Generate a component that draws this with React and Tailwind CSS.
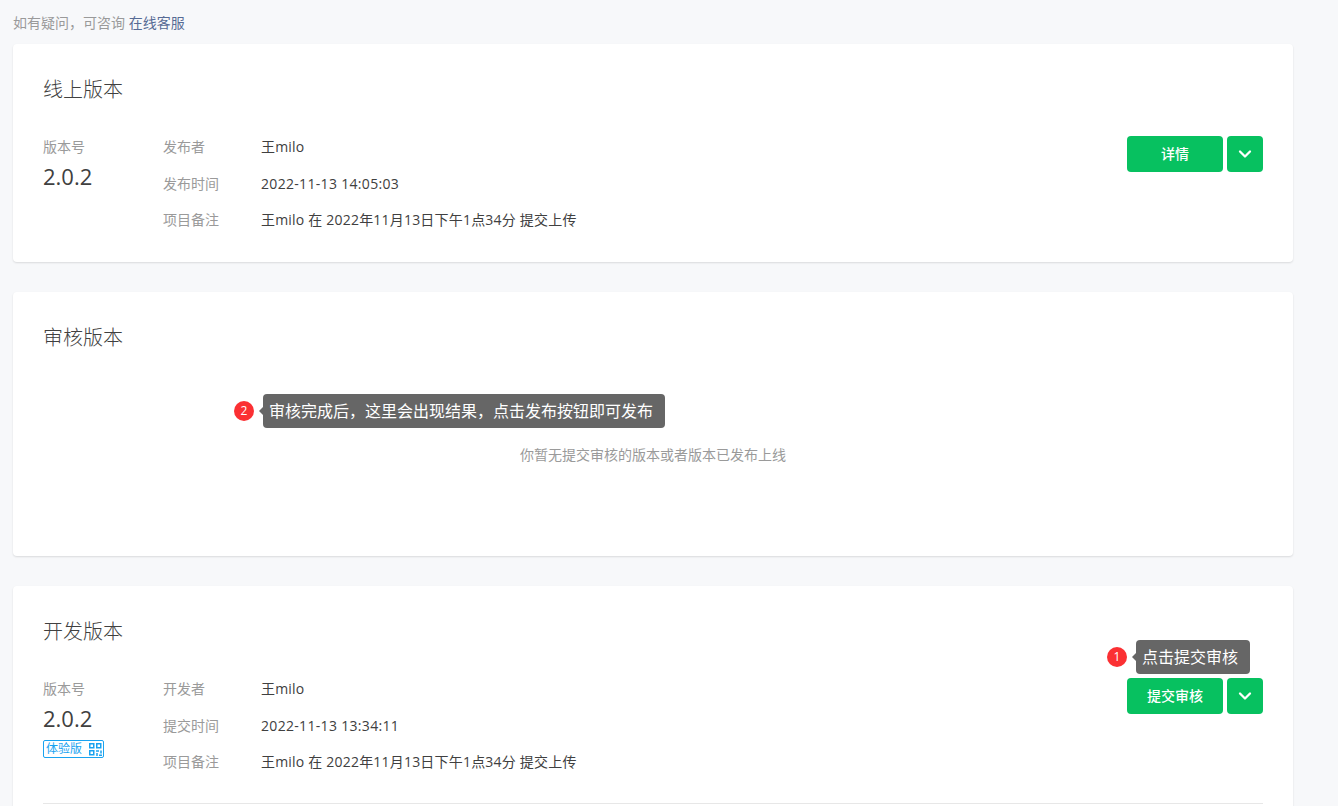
import React from 'react';
import { ChevronDown } from 'lucide-react';

const FONT = 'font-["Open_Sans","Noto_Sans_CJK_SC",sans-serif]';

const Field = ({ label, children }) => (
  <div className="flex h-[36.5px] items-center text-sm">
    <span className="w-[98px] text-[#9a9a9a]">{label}</span>
    <span className="text-[#404040]">{children}</span>
  </div>
);

const Actions = ({ label }) => (
  <div className="flex gap-1">
    <button className="h-9 w-[96px] rounded bg-[#07c160] text-sm font-medium text-white">{label}</button>
    <button className="flex h-9 w-9 items-center justify-center rounded bg-[#07c160] text-white">
      <ChevronDown size={20} strokeWidth={2.75} />
    </button>
  </div>
);

const Hint = ({ num, text, className }) => (
  <div className={`absolute flex items-center ${className}`}>
    <span className="flex h-5 w-5 items-center justify-center rounded-full bg-[#fb3033] text-xs text-white">{num}</span>
    <span className="ml-[5px] h-0 w-0 border-y-[4px] border-r-[4px] border-y-transparent border-r-[#666666]" />
    <span className="flex h-[34px] items-center rounded-sm bg-[#666666] pl-1.5 pr-3 text-base text-white">{text}</span>
  </div>
);

const QrIcon = () => (
  <svg width="13" height="13" viewBox="0 0 13 13" fill="none" stroke="#1aa3f0" strokeWidth="1.5">
    <rect x="0.75" y="0.75" width="4" height="4" />
    <rect x="7.75" y="0.75" width="4" height="4" />
    <rect x="0.75" y="7.75" width="4" height="4" />
    <path d="M7 8h3M12 7.5v3M8 10v3M10 12.25h3" />
  </svg>
);

const Card = ({ title, className, children }) => (
  <section className={`relative rounded bg-white px-[30px] pt-[31px] shadow-[0_1px_2px_rgba(0,0,0,0.12)] ${className}`}>
    <h2 className="text-xl font-light leading-[30px] text-[#404040]">{title}</h2>
    {children}
  </section>
);

const VersionRow = ({ people, personLabel, timeLabel, time, action, trial }) => (
  <div className="flex justify-between">
    <div className="flex">
      <div className="w-[120px]">
        <div className="flex h-[22px] items-center text-sm text-[#9a9a9a]">版本号</div>
        <div className="mt-[3px] text-[22px] leading-[30px] text-[#404040]">2.0.2</div>
        {trial && (
          <div className="mt-[7px] flex h-[18px] w-[61px] items-center justify-between rounded-[2px] border border-[#1aa3f0] pl-[2px] pr-[1px] text-xs text-[#1aa3f0]">
            体验版
            <QrIcon />
          </div>
        )}
      </div>
      <div className="-mt-[7px]">
        <Field label={personLabel}>
          <span className="tracking-[0.2px]">{people}</span>
        </Field>
        <Field label={timeLabel}>
          <span className="tracking-[0.32px]">{time}</span>
        </Field>
        <Field label="项目备注">
          <span className="tracking-[0.2px]">王milo 在 2022年11月13日下午1点34分 提交上传</span>
        </Field>
      </div>
    </div>
    <Actions label={action} />
  </div>
);

export default function App() {
  return (
    <div className={`h-[806px] w-[1338px] overflow-hidden bg-[#f7f8fa] pl-[13px] ${FONT}`}>
      <div className="flex h-11 items-start pt-[13px] text-sm leading-[20px] text-[#9a9a9a]">
        如有疑问，可咨询&nbsp;<span className="text-[#576b95]">在线客服</span>
      </div>
      <div className="flex w-[1280px] flex-col gap-[30px]">
        <Card title="线上版本" className="h-[218px]">
          <div className="mt-[31px]">
            <VersionRow
              people="王milo"
              personLabel="发布者"
              timeLabel="发布时间"
              time="2022-11-13 14:05:03"
              action="详情"
            />
          </div>
        </Card>

        <Card title="审核版本" className="h-[264px]">
          <p className="mt-[92px] text-center text-sm leading-5 text-[#9a9a9a]">你暂无提交审核的版本或者版本已发布上线</p>
          <Hint num="2" text="审核完成后，这里会出现结果，点击发布按钮即可发布" className="left-[221px] top-[102px]" />
        </Card>

        <Card title="开发版本" className="h-[300px]">
          <div className="mt-[31px]">
            <VersionRow
              people="王milo"
              personLabel="开发者"
              timeLabel="提交时间"
              time="2022-11-13 13:34:11"
              action="提交审核"
              trial
            />
          </div>
          <div className="mt-[22px] h-px bg-[#e7e7e7]" />
          <Hint num="1" text="点击提交审核" className="left-[1094px] top-[54px]" />
        </Card>
      </div>
    </div>
  );
}
